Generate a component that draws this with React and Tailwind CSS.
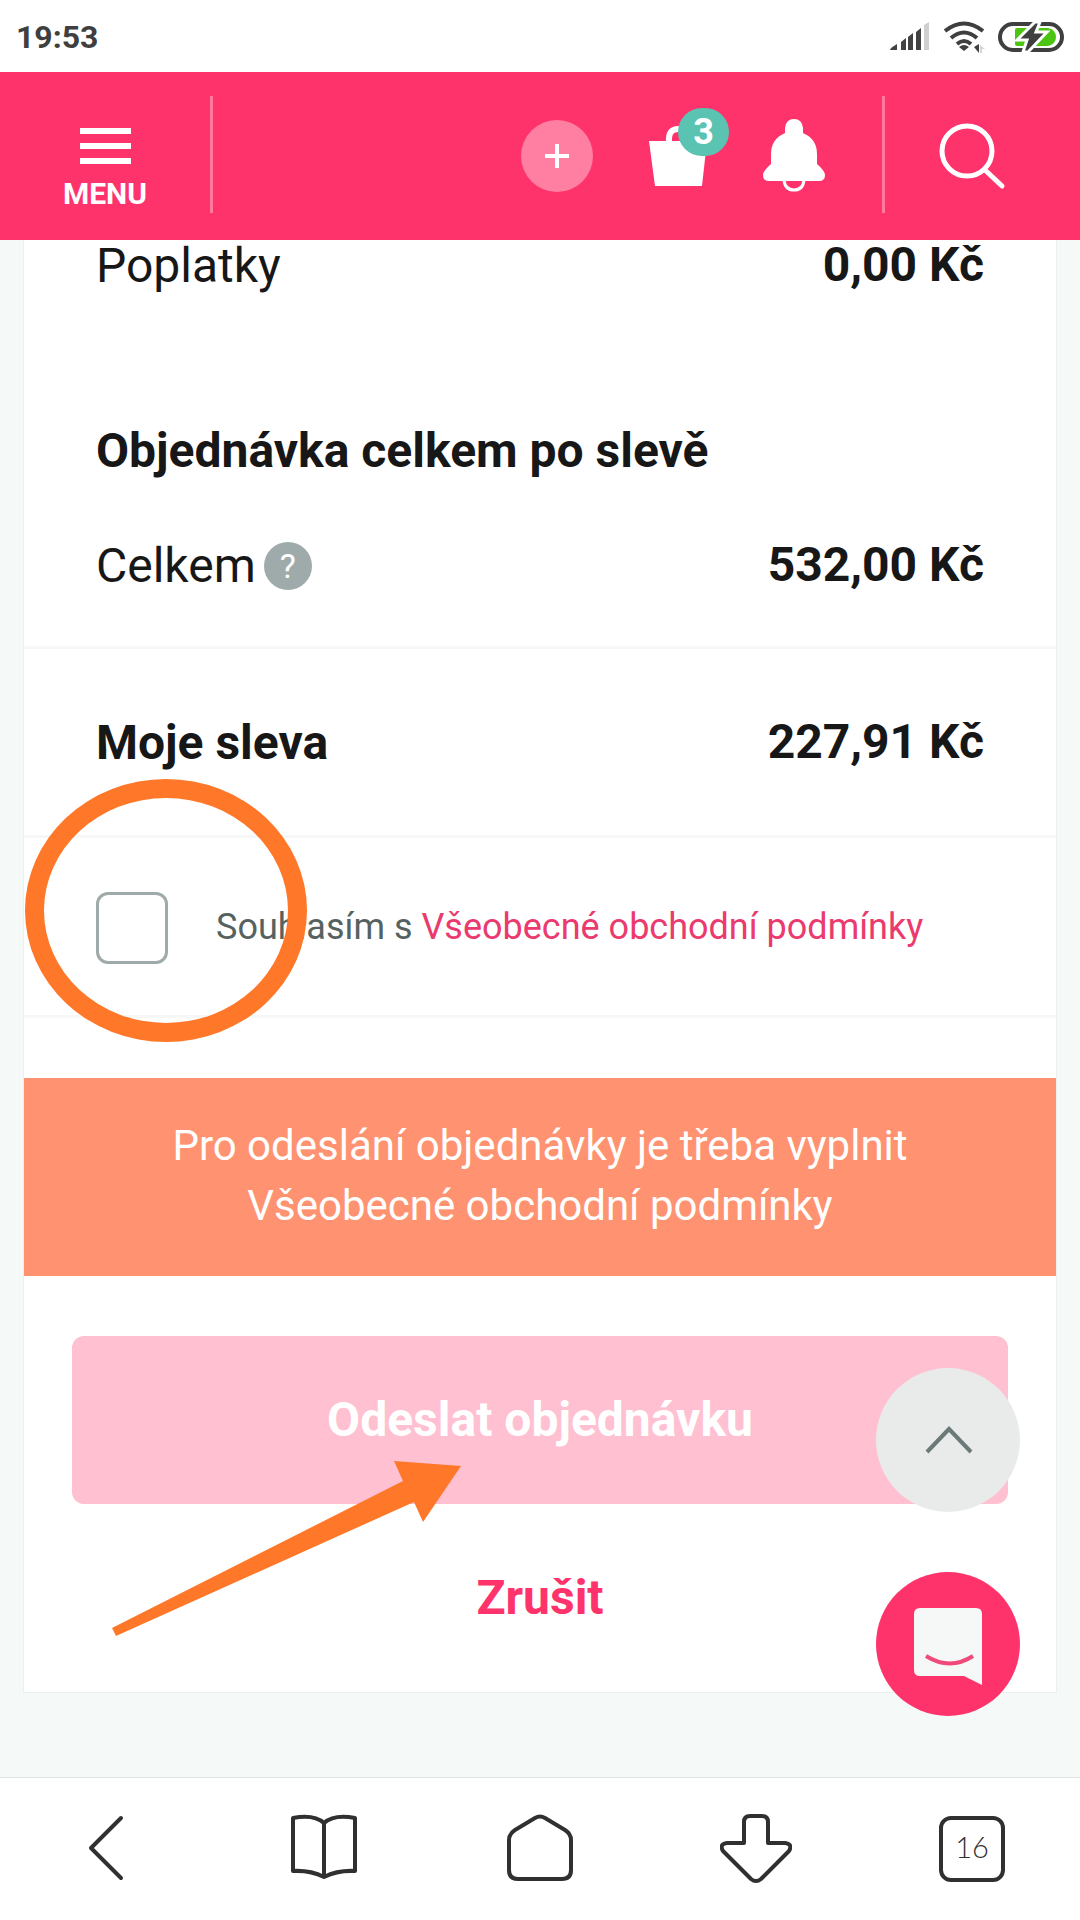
import React, { useState } from 'react';

const StatusBar = () => (
  <div className="flex h-[72px] shrink-0 items-center justify-between bg-white px-4 pt-px text-[#3f3f3f]">
    <span className="text-[32px] leading-[32px] font-bold">19:53</span>
    <div className="flex items-center gap-[13px]">
      <svg width="40" height="30" viewBox="0 0 40 30" fill="#424242">
        <path d="M0 28Q0 26 7 22V28Z M11 20L16 16V28H11Z M18 15L23 11V28H18Z M26 10L31 6V28H26Z" />
        <path d="M34 3L39 0V28H34Z" fill="#cfcfcf" />
      </svg>
      <svg width="42" height="32" viewBox="0 0 42 32" fill="none" stroke="#3f3f3f" strokeWidth="4">
        <path d="M2 10Q21 -5 40 10" />
        <path d="M8 17Q21 6 34 17" />
        <path d="M14 23Q21 17 28 23" />
        <path d="M16 26Q21 22 26 26L21 30Z" fill="#3f3f3f" stroke="none" />
        <path d="M31 26L36 23V32Z" fill="#3f3f3f" stroke="none" />
        <path d="M37 24L42 28H39V32H37Z" fill="#d4d4d4" stroke="none" />
      </svg>
      <svg width="66" height="30" viewBox="0 0 66 30">
        <rect x="2" y="2" width="62" height="26" rx="13" fill="#fff" stroke="#3f3f3f" strokeWidth="4" />
        <path d="M19 6H50Q58 8 58 15Q58 22 50 24H19Q17 24 17 22V8Q17 6 19 6Z" fill="#4cc412" />
        <path d="M37 0L19 18H29L25 30H30L49 10H38L42 0Z" fill="#3f3f3f" stroke="#fff" strokeWidth="3" />
      </svg>
    </div>
  </div>
);

const Header = () => (
  <header className="relative z-10 flex h-[168px] shrink-0 items-center bg-[#ff336b] text-white">
    <button type="button" className="flex w-[210px] flex-col items-center gap-[14px] pt-[26px]">
      <span className="flex flex-col gap-[9px]">
        <span className="h-[6px] w-[51px] bg-white" />
        <span className="h-[6px] w-[51px] bg-white" />
        <span className="h-[6px] w-[51px] bg-white" />
      </span>
      <span className="text-[30px] leading-[32px] font-bold">MENU</span>
    </button>
    <span className="mb-[3px] h-[117px] w-[3px] bg-white/35" />

    <div className="mr-[57px] ml-auto flex items-center gap-14">
      <button type="button" aria-label="Přidat" className="flex size-[72px] items-center justify-center rounded-full bg-[#ff7fa2]">
        <svg width="26" height="26" viewBox="0 0 26 26" stroke="#fff" strokeWidth="4">
          <path d="M1 13H25M13 1V25" />
        </svg>
      </button>
      <button type="button" aria-label="Košík" className="relative w-[58px]">
        <svg width="58" height="60" viewBox="0 0 58 60">
          <path d="M0 15H58L53 60H6Z" fill="#fff" />
          <path d="M20 16Q19 3 29 3H33Q42 3 41 16" fill="none" stroke="#fff" strokeWidth="6" />
        </svg>
        <span className="absolute -top-[18px] left-[29px] flex h-12 w-[51px] items-center justify-center rounded-full bg-[#5bc3b1] text-[36px] leading-[36px] font-bold">
          3
        </span>
      </button>
      <button type="button" aria-label="Upozornění">
        <svg width="62" height="74" viewBox="0 0 62 74">
          <path
            d="M22 14V9Q23 0 31 0Q39 0 40 9V14Q54 20 54 35V45Q62 52 62 56Q62 62 56 62H6Q0 62 0 56Q0 52 8 45V35Q8 20 22 14Z"
            fill="#fff"
          />
          <path d="M21 61Q22 71 31 71Q40 71 41 61" fill="none" stroke="#fff" strokeWidth="3" />
        </svg>
      </button>
    </div>

    <span className="mb-[3px] h-[117px] w-[3px] bg-white/35" />
    <button type="button" aria-label="Hledat" className="pr-[74px] pl-[54px]">
      <svg width="67" height="67" viewBox="0 0 67 67" fill="none" stroke="#fff" strokeWidth="5" strokeLinecap="round">
        <circle cx="28" cy="28" r="25" />
        <path d="M46 47L63 63" />
      </svg>
    </button>
  </header>
);

const Row = ({ label, value, className, children }) => (
  <div className={`flex items-start justify-between px-[72px] text-[48px] ${className}`}>
    <dt className="flex items-center gap-2 leading-[48px]">
      {label}
      {children}
    </dt>
    <dd className="leading-[46px] font-bold">{value}</dd>
  </div>
);

const Summary = () => (
  <>
    <dl>
      <Row label="Poplatky" value="0,00 Kč" className="pt-[2px]" />
    </dl>
    <h2 className="mt-[137px] px-[72px] text-[48px] leading-[48px] font-bold">Objednávka celkem po slevě</h2>
    <dl className="mt-[67px]">
      <Row label="Celkem" value="532,00 Kč" className="border-b-3 border-[#f5f8f7] pb-14">
        <button
          type="button"
          aria-label="Nápověda"
          className="flex size-12 items-center justify-center rounded-full bg-[#9fabaa] text-[34px] leading-[34px] text-white"
        >
          ?
        </button>
      </Row>
      <Row label="Moje sleva" value="227,91 Kč" className="border-b-3 border-[#f5f8f7] pt-[70px] pb-[68px] font-bold" />
    </dl>
  </>
);

const Consent = ({ checked, onChange }) => (
  <div className="relative flex items-center gap-12 border-b-3 border-[#f5f8f7] px-[72px] pt-[54px] pb-[51px]">
    <input
      id="terms"
      type="checkbox"
      checked={checked}
      onChange={(e) => onChange(e.target.checked)}
      className="size-[72px] shrink-0 appearance-none rounded-xl border-3 border-[#9fabaa] bg-white checked:bg-[#ff336b]"
    />
    <label htmlFor="terms" className="pb-[2px] text-[36px] leading-[48px] text-[#55625f]">
      Souhlasím s{' '}
      <a href="#podminky" className="text-[#ea3a6e]">
        Všeobecné obchodní podmínky
      </a>
    </label>
    {/* highlight ring */}
    <span className="pointer-events-none absolute -top-[59px] left-px h-[263px] w-[282px] rounded-[50%] border-[19px] border-[#ff7728]" />
  </div>
);

const Actions = ({ disabled }) => (
  <div className="relative flex flex-col items-center px-12 pt-[60px] pb-[70px]">
    <button
      type="submit"
      disabled={disabled}
      className="h-[168px] w-full rounded-xl bg-[#ff336b] text-[48px] leading-[48px] font-bold text-white disabled:bg-[#ffc0d1]"
    >
      Odeslat objednávku
    </button>
    <button type="button" className="mt-[70px] text-[48px] leading-[48px] font-bold text-[#ff336b]">
      Zrušit
    </button>
    <svg className="pointer-events-none absolute top-[184px] left-[88px]" width="350" height="178" viewBox="0 0 350 178" fill="#ff7728">
      <path d="M0 168L291 21L282 1L349 6L311 62L302 42L4 176Z" />
    </svg>
  </div>
);

const FloatingButtons = () => (
  <div className="absolute right-15 bottom-[61px] flex flex-col gap-15">
    <button type="button" aria-label="Nahoru" className="size-36 rounded-full bg-[#e9ebea]">
      <svg width="144" height="144" viewBox="0 0 144 144" fill="none" stroke="#6b7a78" strokeWidth="4">
        <path d="M51 84L73 61L95 84" />
      </svg>
    </button>
    <button type="button" aria-label="Chat" className="size-36 rounded-full bg-[#ff336b]">
      <svg width="144" height="144" viewBox="0 0 144 144">
        <path d="M44 36H100Q106 36 106 42V113L88 104H44Q38 104 38 98V42Q38 36 44 36Z" fill="#f5f8f7" />
        <path d="M50 84Q74 99 97 84" fill="none" stroke="#f04a7b" strokeWidth="4" />
      </svg>
    </button>
  </div>
);

const navIcons = [
  { label: 'Zpět', d: 'M49 5L19 35L49 65' },
  { label: 'Záložky', d: 'M5 5Q26 1 36 10Q46 1 67 5V58Q50 57 36 64Q22 57 5 58ZM36 10V64' },
  { label: 'Domů', d: 'M5 27Q5 21 11 17L31 5Q36 2 41 5L61 17Q67 21 67 27V57Q67 66 58 66H14Q5 66 5 57Z' },
  { label: 'Stažené', d: 'M24 30V9Q24 3 30 3H42Q48 3 48 9V30H65Q73 31 69 38L41 66Q36 70 31 66L3 38Q-1 31 7 30Z' },
];

const BottomNav = () => (
  <nav className="grid h-[143px] shrink-0 grid-cols-5 items-center border-t border-[#dfe3e2] bg-white pb-px text-[#303030]">
    {navIcons.map((icon) => (
      <button key={icon.label} type="button" aria-label={icon.label} className="flex justify-center">
        <svg
          width="72"
          height="72"
          viewBox="0 0 72 72"
          fill="none"
          stroke="currentColor"
          strokeWidth="4"
          strokeLinecap="round"
          strokeLinejoin="round"
        >
          <path d={icon.d} />
        </svg>
      </button>
    ))}
    <button
      type="button"
      className="flex size-[66px] items-center justify-center justify-self-center rounded-xl border-4 border-[#303030] pb-1 font-[Lato,sans-serif] text-[29px] leading-[32px] font-light"
    >
      16
    </button>
  </nav>
);

const App = () => {
  const [accepted, setAccepted] = useState(false);

  return (
    <div className="flex min-h-screen flex-col bg-[#f5f9f8] font-[Roboto,sans-serif] text-[#171717]">
      <StatusBar />
      <Header />
      <main className="relative flex-1 px-6 pb-[84px]">
        <form onSubmit={(e) => e.preventDefault()} className="bg-white shadow-[0_0_0_1px_#ecf1f0]">
          <Summary />
          <Consent checked={accepted} onChange={setAccepted} />
          <p className="mt-[60px] bg-[#ff9270] px-[120px] pt-[38px] pb-10 text-center text-[42px] leading-[60px] text-white">
            Pro odeslání objednávky je třeba vyplnit Všeobecné obchodní podmínky
          </p>
          <Actions disabled={!accepted} />
        </form>
        <FloatingButtons />
      </main>
      <BottomNav />
    </div>
  );
};

export default App;
